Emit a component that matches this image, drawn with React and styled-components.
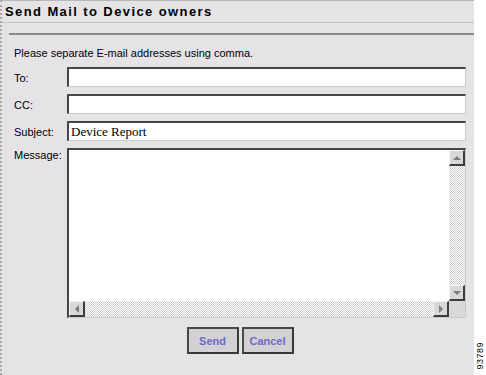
import React from 'react';
import styled, { createGlobalStyle } from 'styled-components';

const GlobalStyle = createGlobalStyle`
  html, body {
    margin: 0;
    padding: 0;
    background: #ffffff;
  }
  body {
    font-family: "Liberation Sans", Arial, sans-serif;
  }
`;

const Page = styled.div`
  display: flex;
  width: 486px;
  height: 375px;
  overflow: hidden;
`;

const Panel = styled.div`
  width: 472px;
  height: 375px;
  display: flex;
  flex-direction: column;
  background: #e6e3e6;
  border-left: 2px dotted #aaa7aa;
`;

const TitleBar = styled.div`
  height: 21px;
  line-height: 21px;
  border-top: 1px solid #b9b6b9;
  border-bottom: 1px solid #c4c1c4;
  padding-left: 3px;
  font-size: 13px;
  font-weight: bold;
  letter-spacing: 1.4px;
  color: #000;
`;

const Rule = styled.div`
  height: 2px;
  margin: 10px 0 0 7px;
  background: #8a888a;
`;

const Form = styled.form`
  display: grid;
  grid-template-columns: 53px 399px;
  row-gap: 7px;
  padding: 12px 0 0 12px;
  font-size: 11px;
  color: #000;
`;

const Note = styled.div`
  grid-column: 1 / 3;
  line-height: 13px;
`;

const Label = styled.label`
  align-self: ${p => (p.$top ? 'start' : 'center')};
  padding-top: ${p => (p.$top ? '1px' : '2px')};
  line-height: 13px;
`;

const Field = styled.input`
  box-sizing: border-box;
  width: 399px;
  height: 20px;
  margin: 0;
  padding: 0 2px;
  background: #ffffff;
  border-top: 2px solid #474547;
  border-left: 2px solid #474547;
  border-bottom: 1px solid #cac8ca;
  border-right: 1px solid #cac8ca;
  font-family: "Liberation Serif", "Times New Roman", serif;
  font-size: 13px;
  color: #000;
  outline: none;
`;

const MessageBox = styled.div`
  box-sizing: border-box;
  width: 399px;
  height: 170px;
  display: grid;
  grid-template-columns: 1fr 16px;
  grid-template-rows: 1fr 16px;
  background: #ffffff;
  border-top: 2px solid #474547;
  border-left: 2px solid #474547;
  border-bottom: 1px solid #cac8ca;
  border-right: 1px solid #cac8ca;
`;

const TextArea = styled.textarea`
  border: none;
  margin: 0;
  padding: 2px;
  resize: none;
  overflow: hidden;
  outline: none;
  background: #ffffff;
`;

const Track = styled.div`
  display: flex;
  flex-direction: ${p => (p.$vertical ? 'column' : 'row')};
  justify-content: space-between;
  background: repeating-conic-gradient(#cfcdcf 0 25%, #ffffff 0 50%) 0 0 / 2px 2px;
`;

const ArrowButton = styled.div`
  box-sizing: border-box;
  width: 16px;
  height: 16px;
  display: flex;
  align-items: center;
  justify-content: center;
  background: #d9d7d9;
  border-top: 1px solid #f4f4f4;
  border-left: 1px solid #f4f4f4;
  border-bottom: 2px solid #3e3c3e;
  border-right: 2px solid #3e3c3e;
`;

const Corner = styled.div`
  background: #d9d7d9;
`;

const ButtonRow = styled.div`
  grid-column: 1 / 3;
  display: flex;
  justify-content: center;
  gap: 3px;
  margin-top: 2px;
`;

const Button = styled.button`
  box-sizing: border-box;
  width: 52px;
  height: 27px;
  margin: 0;
  padding: 0;
  background: #d3d1d3;
  border: 2px solid #3a383a;
  border-top-color: #4a484a;
  border-left-color: #4a484a;
  font-family: "Liberation Sans", Arial, sans-serif;
  font-size: 11px;
  font-weight: bold;
  color: #6a6ac6;
  cursor: pointer;
`;

const Strip = styled.div`
  width: 12px;
  display: flex;
  flex-direction: column;
  justify-content: flex-end;
  align-items: center;
  padding-bottom: 5px;
  background: #ffffff;
`;

const FigureNo = styled.span`
  writing-mode: vertical-rl;
  transform: rotate(180deg);
  font-size: 9px;
  letter-spacing: 0.5px;
  color: #000;
`;

const Arrow = ({ dir }) => {
  const pts = {
    up: '0,6 4,2 8,6',
    down: '0,2 4,6 8,2',
    left: '6,0 2,4 6,8',
    right: '2,0 6,4 2,8',
  }[dir];
  return (
    <svg width="8" height="8" viewBox="0 0 8 8">
      <polygon points={pts} fill="#7c7a7c" />
    </svg>
  );
};

const App = () => (
  <Page>
    <GlobalStyle />
    <Panel>
      <TitleBar>Send Mail to Device owners</TitleBar>
      <Rule />
      <Form onSubmit={e => e.preventDefault()}>
        <Note>Please separate E-mail addresses using comma.</Note>
        <Label htmlFor="to">To:</Label>
        <Field id="to" type="text" />
        <Label htmlFor="cc">CC:</Label>
        <Field id="cc" type="text" />
        <Label htmlFor="subject">Subject:</Label>
        <Field id="subject" type="text" defaultValue="Device Report" />
        <Label htmlFor="message" $top>Message:</Label>
        <MessageBox>
          <TextArea id="message" />
          <Track $vertical>
            <ArrowButton><Arrow dir="up" /></ArrowButton>
            <ArrowButton><Arrow dir="down" /></ArrowButton>
          </Track>
          <Track>
            <ArrowButton><Arrow dir="left" /></ArrowButton>
            <ArrowButton><Arrow dir="right" /></ArrowButton>
          </Track>
          <Corner />
        </MessageBox>
        <ButtonRow>
          <Button type="submit">Send</Button>
          <Button type="button">Cancel</Button>
        </ButtonRow>
      </Form>
    </Panel>
    <Strip>
      <FigureNo>93789</FigureNo>
    </Strip>
  </Page>
);

export default App;
